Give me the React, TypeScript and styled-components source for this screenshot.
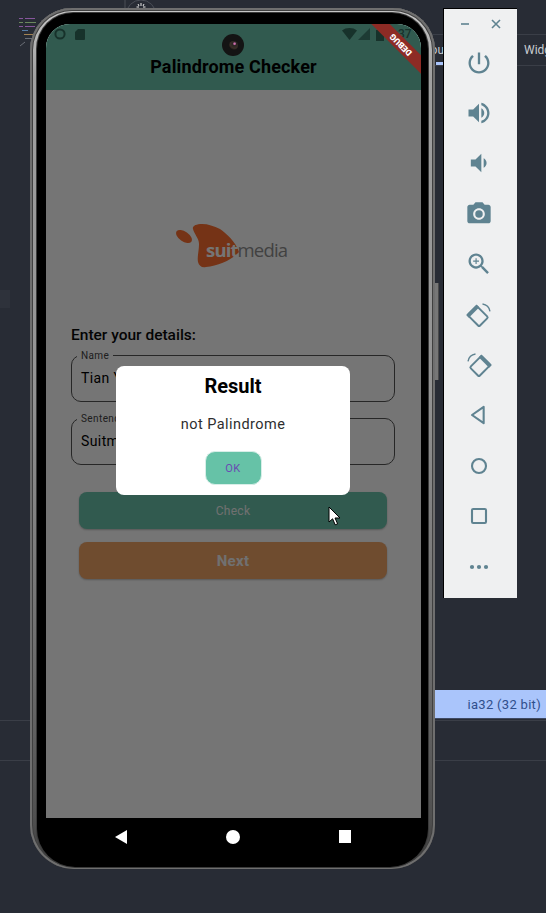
import React from 'react'
import styled, { createGlobalStyle } from 'styled-components'

const GlobalStyle = createGlobalStyle`
	html, body {
		margin: 0;
		padding: 0;
		background: #282c35;
		font-family: Roboto, "Liberation Sans", sans-serif;
	}
`

const Desktop = styled.div`
	position: relative;
	width: 546px;
	height: 913px;
	overflow: hidden;
	background: #282c35;
`

// ide leftovers behind the emulator
const Rule = styled.div<{ $top: number; $left?: number }>`
	position: absolute;
	left: ${(p) => p.$left ?? 0}px;
	right: 0;
	top: ${(p) => p.$top}px;
	height: 1px;
	background: #3a3e47;
`
const SidePanelTab = styled.div`
	position: absolute;
	left: 0;
	top: 290px;
	width: 10px;
	height: 18px;
	background: #2e323b;
`
const SideTab = styled.div`
	position: absolute;
	left: 524px;
	top: 42px;
	color: #c9ccd2;
	font-size: 12px;
	line-height: 16px;
	white-space: nowrap;
`
const ClippedTab = styled.div`
	position: absolute;
	left: 422px;
	top: 42px;
	width: 22px;
	padding-left: 14px;
	box-sizing: border-box;
	overflow: hidden;
	color: #c9ccd2;
	font-size: 12px;
	line-height: 16px;
	direction: rtl;
`
const TabUnderline = styled.div`
	position: absolute;
	left: 436px;
	top: 62px;
	width: 8px;
	height: 3px;
	background: #a9c4fb;
`
const ArchRow = styled.div`
	position: absolute;
	left: 420px;
	right: 0;
	top: 690px;
	height: 28px;
	display: flex;
	align-items: center;
	justify-content: flex-end;
	padding-right: 5px;
	background: #aac5fb;
	border-bottom: 1px solid #3f4a63;
	color: #2f4f8c;
	font-size: 13px;
	letter-spacing: 0.3px;
`
const BackdropArt = styled.svg`
	position: absolute;
	left: 0;
	top: 0;
`

// the phone
const PhoneFrame = styled.div`
	position: absolute;
	left: 30px;
	top: 8px;
	width: 405px;
	height: 861px;
	box-sizing: border-box;
	padding: 5px 7px 2px;
	border-radius: 42px 42px 44px 44px;
	background: linear-gradient(180deg, #c8c8c8 0, #a0a0a0 8%, #929292 45%, #6a6a6a 78%, #505050 94%, #3c3c3c 100%);
	box-shadow: inset 0 0 0 2px #6f6f6f, inset 0 0 0 3px #404040;
`
const PhoneBody = styled.div`
	height: 100%;
	box-sizing: border-box;
	padding-top: 11px;
	display: flex;
	flex-direction: column;
	background: #000;
	border-radius: 36px 36px 38px 38px;
	box-shadow: 0 0 0 1px #3a3a3a;
	overflow: hidden;
`
const Screen = styled.div`
	position: relative;
	margin: 0 7px 0 9px;
	height: 794px;
	flex: none;
	display: flex;
	flex-direction: column;
	background: #fff;
	border-radius: 24px 24px 0 0;
	overflow: hidden;
`
const AppBar = styled.header`
	height: 66px;
	flex: none;
	box-sizing: border-box;
	background: #6bc4ac;
	display: flex;
	align-items: flex-end;
	justify-content: center;
	padding-bottom: 12px;
`
const Title = styled.h1`
	margin: 0;
	font-size: 18px;
	line-height: 22px;
	font-weight: 700;
	color: #000;
	letter-spacing: 0.15px;
`
const Body = styled.main`
	flex: 1;
	display: flex;
	flex-direction: column;
	padding: 134px 26px 0 25px;
`
const LogoRow = styled.div`
	display: flex;
	justify-content: center;
	padding-right: 3px;
	margin-bottom: 57px;
`
const Heading = styled.h2`
	margin: 0 0 10px;
	font-size: 15.5px;
	line-height: 20px;
	font-weight: 500;
	color: #0a0a0a;
	letter-spacing: 0;
`
const Field = styled.div`
	position: relative;
	height: 47px;
	box-sizing: border-box;
	border: 1px solid #555;
	border-radius: 10px;
	display: flex;
	align-items: center;
	padding: 0 0 2px 9px;
	margin-bottom: 16px;
	font-size: 14px;
	color: #000;
	letter-spacing: 0.4px;
`
const FieldLabel = styled.span`
	position: absolute;
	left: 5px;
	top: -6px;
	padding: 0 4px;
	background: #fff;
	font-size: 10px;
	line-height: 11px;
	letter-spacing: 0.4px;
	color: #444;
`
const ActionButton = styled.button<{ $bg: string; $big?: boolean }>`
	display: block;
	width: 100%;
	height: 37px;
	border: 0;
	border-radius: 8px;
	background: ${(p) => p.$bg};
	color: #f5f5f5;
	font-family: inherit;
	font-size: ${(p) => (p.$big ? '15px' : '12px')};
	font-weight: ${(p) => (p.$big ? 700 : 400)};
	letter-spacing: 0.3px;
	box-shadow: 0 1px 2px rgba(0, 0, 0, 0.25);
`
const Actions = styled.div`
	display: flex;
	flex-direction: column;
	gap: 13px;
	margin: 11px 8px 0;
`

const Scrim = styled.div`
	position: absolute;
	inset: 0;
	background: rgba(0, 0, 0, 0.54);
`
const Dialog = styled.div`
	position: absolute;
	left: 70px;
	top: 342px;
	width: 234px;
	height: 129px;
	box-sizing: border-box;
	padding-top: 8px;
	background: #fff;
	border-radius: 8px;
	display: flex;
	flex-direction: column;
	align-items: center;
`
const DialogTitle = styled.div`
	font-size: 20px;
	line-height: 24px;
	font-weight: 700;
	color: #000;
`
const DialogText = styled.div`
	margin-top: 17px;
	font-size: 14.5px;
	line-height: 20px;
	font-weight: 400;
	color: #2e2e2e;
	letter-spacing: 0.45px;
`
const OkButton = styled.button`
	margin-top: 16px;
	width: 57px;
	height: 34px;
	border: 1px solid #d8eee8;
	border-radius: 10px;
	background: #66c2a7;
	color: #6a4bb3;
	font-family: inherit;
	font-size: 11px;
	font-weight: 400;
	letter-spacing: 0.4px;
`

// status bar sits over the scrim colours, so it's placed over the app bar
const StatusBar = styled.div`
	position: absolute;
	left: 8px;
	right: 0;
	top: 3px;
	height: 14px;
	display: flex;
	align-items: center;
	color: #17322b;
	font-size: 12px;
	font-weight: 500;
`
const StatusSpacer = styled.div`
	flex: 1;
`
const StatusClock = styled.span`
	margin-left: 4px;
	width: 33px;
`
const CameraHole = styled.div`
	position: absolute;
	left: 176px;
	top: 10px;
	width: 22px;
	height: 22px;
	border-radius: 50%;
	background: #141414;
	display: flex;
	align-items: center;
	justify-content: center;
`
const CameraLens = styled.div`
	width: 9px;
	height: 9px;
	border-radius: 50%;
	background: radial-gradient(circle at 62% 30%, #d070b0 0 8%, #2a2422 22%, #3a2f28 55%, #0c0c0c 80%);
`
const DebugBanner = styled.div`
	position: absolute;
	left: 313px;
	top: 14px;
	width: 84px;
	height: 13px;
	display: flex;
	align-items: center;
	justify-content: center;
	transform: rotate(225deg);
	background: #8d2b25;
	color: #fff;
	font-size: 8.5px;
	line-height: 13px;
	font-weight: 900;
`

const NavBar = styled.nav`
	flex: 1;
	display: flex;
	align-items: flex-start;
	justify-content: space-between;
	padding: 12px 77px 0 78px;
`
const SideButtons = styled.div`
	position: absolute;
	left: 433px;
	top: 283px;
	width: 5px;
	height: 97px;
	background: #777;
	border-right: 1px solid #4a4a4a;
`

// emulator side toolbar
const EmuToolbar = styled.aside`
	position: absolute;
	left: 443px;
	top: 8px;
	width: 74px;
	height: 590px;
	box-sizing: border-box;
	border-left: 1px solid #000;
	border-top: 1px solid #000;
	background: #eff0f1;
	padding-right: 3px;
	display: flex;
	flex-direction: column;
	align-items: center;
	color: #5f8391;
`
const WindowControls = styled.div`
	width: 100%;
	height: 28.5px;
	flex: none;
	box-sizing: border-box;
	padding: 9px 12px 0 15px;
	display: flex;
	justify-content: space-between;
`
const ToolSlot = styled.div`
	height: 50.4px;
	flex: none;
	display: flex;
	align-items: center;
	justify-content: center;
`
const ToolIcon = styled.svg`
	width: 28px;
	height: 28px;
	fill: currentColor;
`
const ControlIcon = styled.svg`
	width: 12px;
	height: 12px;
	stroke: currentColor;
	stroke-width: 1.6;
	fill: none;
`
const Cursor = styled.svg`
	position: absolute;
	left: 328px;
	top: 506px;
`

const TOOL_PATHS = [
	'M13 3h-2v10h2V3zm4.83 2.17l-1.42 1.42C17.99 7.86 19 9.81 19 12c0 3.87-3.13 7-7 7s-7-3.13-7-7c0-2.19 1.01-4.14 2.58-5.42L6.17 5.17C4.23 6.82 3 9.26 3 12c0 4.97 4.03 9 9 9s9-4.03 9-9c0-2.74-1.23-5.18-3.17-6.83z',
	'M3 9v6h4l5 5V4L7 9H3zm13.5 3c0-1.77-1.02-3.29-2.5-4.03v8.05c1.48-.73 2.5-2.25 2.5-4.02zM14 3.23v2.06c2.89.86 5 3.54 5 6.71s-2.11 5.85-5 6.71v2.06c4.01-.91 7-4.49 7-8.77s-2.99-7.86-7-8.77z',
	'M18.5 12c0-1.77-1.02-3.29-2.5-4.03v8.05c1.48-.73 2.5-2.25 2.5-4.02zM5 9v6h4l5 5V4L9 9H5z',
	'M12 8.8a3.2 3.2 0 1 0 0 6.4 3.2 3.2 0 0 0 0-6.4zM9 2L7.17 4H4c-1.1 0-2 .9-2 2v12c0 1.1.9 2 2 2h16c1.1 0 2-.9 2-2V6c0-1.1-.9-2-2-2h-3.17L15 2H9zm3 15c-2.76 0-5-2.24-5-5s2.24-5 5-5 5 2.24 5 5-2.24 5-5 5z',
	'M15.5 14h-.79l-.28-.27C15.41 12.59 16 11.11 16 9.5 16 5.91 13.09 3 9.5 3S3 5.91 3 9.5 5.91 16 9.5 16c1.61 0 3.09-.59 4.23-1.57l.27.28v.79l5 4.99L20.49 19l-4.99-5zm-6 0C7.01 14 5 11.99 5 9.5S7.01 5 9.5 5 14 7.01 14 9.5 11.99 14 9.5 14zM12 10h-2v2H9v-2H7V9h2V7h1v2h2v1z',
]

const RotateIcon = ({ mirror }: { mirror?: boolean }) => (
	<ToolIcon viewBox='0 0 24 24'>
		<g transform={mirror ? 'translate(24 0) scale(-1 1)' : undefined}>
			<g transform='rotate(-45 11 13)' fill='none' stroke='currentColor'>
				<rect x='5.5' y='6' width='11' height='14' rx='1.2' strokeWidth='1.7' />
				<rect x='5.5' y='6' width='11' height='1.6' fill='currentColor' strokeWidth='1.7' />
			</g>
			<path d='M15 2.6c3.2.5 5.8 3 6.4 6.2' fill='none' stroke='currentColor' strokeWidth='1.2' />
		</g>
	</ToolIcon>
)

const Logo = () => (
	<svg width='112' height='44' viewBox='0 0 112 44'>
		<ellipse cx='8' cy='12.5' rx='9' ry='5' transform='rotate(35 8 12.5)' fill='#ff7030' />
		<path d='M26 0C20 0 16 2 17 5c1 5 6 9 6 15 0 7-2 13-1 18 1 4 4 6 8 5 12-1 26-7 33-15-3-10-13-19-19-23C38 2 32 0 26 0z' fill='#ff7030' />
		<text x='30' y='33' fontFamily='"Open Sans", sans-serif' fontSize='18.5' fontWeight='700' fill='#fff' letterSpacing='-0.8'>suit</text>
		<text x='61.5' y='33' fontFamily='"Open Sans", sans-serif' fontSize='18.5' fill='#8f8f8f' letterSpacing='-0.8'>media</text>
	</svg>
)

const App = () => {
	return (
		<Desktop>
			<GlobalStyle />
			<Rule $top={34} $left={430} />
			<Rule $top={65} $left={430} />
			<Rule $top={720} />
			<Rule $top={760} />
			<SidePanelTab />
			<BackdropArt width='200' height='60' viewBox='0 0 200 60'>
				<path d='M125 0v14' stroke='#4a4e57' />
				<circle cx='141' cy='15' r='15' fill='none' stroke='#4a4e57' />
				<path d='M141 3v3M138 4l1 2M144 4l-1 2M136.500 7h2.500M145.500 7H143' stroke='#e6e6e6' />
				<g opacity='0.7' strokeWidth='1'>
					<path d='M19 18.500h4M25 18.500h10' stroke='#b068c8' />
					<path d='M19 22.500h4M25 22.500h11' stroke='#88b070' />
					<path d='M19 26.500h4M25 26.500h10' stroke='#b068c8' />
					<path d='M22 30.500h6' stroke='#6aa0d8' />
					<path d='M24 34.500h12' stroke='#d8a860' />
					<path d='M25 38.500h10M20 46l5-4' stroke='#888c94' />
				</g>
			</BackdropArt>
			<ClippedTab>ou</ClippedTab>
			<TabUnderline />
			<SideTab>Widget</SideTab>
			<ArchRow>ia32 (32 bit)</ArchRow>
			<SideButtons />

			<PhoneFrame>
				<PhoneBody>
					<Screen>
						<AppBar>
							<Title>Palindrome Checker</Title>
						</AppBar>
						<Body>
							<LogoRow>
								<Logo />
							</LogoRow>
							<Heading>Enter your details:</Heading>
							<Field>
								<FieldLabel>Name</FieldLabel>
								Tian Yi
							</Field>
							<Field>
								<FieldLabel>Sentence</FieldLabel>
								Suitmedia
							</Field>
							<Actions>
								<ActionButton $bg='#6bc4ac'>Check</ActionButton>
								<ActionButton $bg='#f1a568' $big>Next</ActionButton>
							</Actions>
						</Body>
						<Scrim />
						<StatusBar>
							<svg width='12' height='12' viewBox='0 0 12 12'>
								<circle cx='6' cy='6' r='4.6' fill='none' stroke='currentColor' strokeWidth='2' />
							</svg>
							<svg width='10' height='12' viewBox='0 0 10 12' style={{ marginLeft: 9 }}>
								<path d='M3 1h6a1 1 0 0 1 1 1v9a1 1 0 0 1-1 1H1a1 1 0 0 1-1-1V4z' fill='currentColor' />
							</svg>
							<StatusSpacer />
							<svg width='15' height='12' viewBox='0 0 15 12'>
								<path d='M0 2.500C4-.8 11-.8 15 2.500L7.500 12z' fill='currentColor' />
							</svg>
							<svg width='12' height='12' viewBox='0 0 12 12' style={{ marginLeft: 1 }}>
								<path d='M12 0v12H0z' fill='currentColor' opacity='0.75' />
							</svg>
							<svg width='8' height='13' viewBox='0 0 8 13' style={{ marginLeft: 6 }}>
								<path d='M2 1h4v1h2v11H0V2h2z' fill='currentColor' />
							</svg>
							<StatusClock>9:37</StatusClock>
						</StatusBar>
						<DebugBanner>DEBUG</DebugBanner>
						<CameraHole>
							<CameraLens />
						</CameraHole>
						<Dialog>
							<DialogTitle>Result</DialogTitle>
							<DialogText>not Palindrome</DialogText>
							<OkButton>OK</OkButton>
						</Dialog>
					</Screen>
					<NavBar>
						<svg width='12' height='14' viewBox='0 0 12 14'>
							<path d='M12 0v14L0 7z' fill='#fff' />
						</svg>
						<svg width='14' height='14' viewBox='0 0 14 14'>
							<circle cx='7' cy='7' r='7' fill='#fff' />
						</svg>
						<svg width='12.500' height='13' viewBox='0 0 12.500 13'>
							<rect width='12.500' height='13' fill='#fff' />
						</svg>
					</NavBar>
				</PhoneBody>
			</PhoneFrame>

			<Cursor width='13' height='20' viewBox='0 0 13 20'>
				<path d='M1 1v15l3.600-3.200 2.600 6 2.400-1-2.600-5.800H12z' fill='#fff' stroke='#000' strokeWidth='1' />
			</Cursor>

			<EmuToolbar>
				<WindowControls>
					<ControlIcon viewBox='0 0 12 12'>
						<path d='M2 6h8' />
					</ControlIcon>
					<ControlIcon viewBox='0 0 12 12'>
						<path d='M2 2l8 8M10 2l-8 8' />
					</ControlIcon>
				</WindowControls>
				{TOOL_PATHS.map((d) => (
					<ToolSlot key={d}>
						<ToolIcon viewBox='0 0 24 24'>
							<path d={d} />
						</ToolIcon>
					</ToolSlot>
				))}
				<ToolSlot>
					<RotateIcon />
				</ToolSlot>
				<ToolSlot>
					<RotateIcon mirror />
				</ToolSlot>
				<ToolSlot>
					<ToolIcon viewBox='0 0 24 24'>
						<path d='M6 12l10-7v14z' fill='none' stroke='currentColor' strokeWidth='1.800' strokeLinejoin='round' />
					</ToolIcon>
				</ToolSlot>
				<ToolSlot>
					<ToolIcon viewBox='0 0 24 24'>
						<circle cx='12' cy='12' r='6' fill='none' stroke='currentColor' strokeWidth='1.800' />
					</ToolIcon>
				</ToolSlot>
				<ToolSlot>
					<ToolIcon viewBox='0 0 24 24'>
						<rect x='6' y='6' width='12' height='12' rx='1' fill='none' stroke='currentColor' strokeWidth='1.800' />
					</ToolIcon>
				</ToolSlot>
				<ToolSlot>
					<ToolIcon viewBox='0 0 24 24'>
						<circle cx='6' cy='12' r='1.800' />
						<circle cx='12' cy='12' r='1.800' />
						<circle cx='18' cy='12' r='1.800' />
					</ToolIcon>
				</ToolSlot>
			</EmuToolbar>
		</Desktop>
	)
}

export default App
